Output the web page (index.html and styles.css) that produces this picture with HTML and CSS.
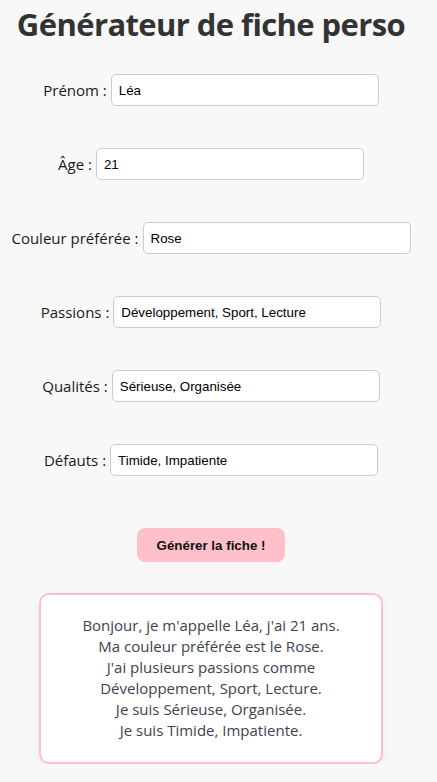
FILE: index.html
```html
<!DOCTYPE html>
<html lang="fr">
<head>
<meta charset="utf-8">
<title>Générateur de fiche perso</title>
<link rel="stylesheet" href="styles.css">
</head>
<body>
<main class="page">
  <h1 class="title">Générateur de fiche perso</h1>
  <form class="form">
    <div class="row"><label class="label">Prénom :</label><input class="field" type="text" value="Léa"></div>
    <div class="row"><label class="label">Âge :</label><input class="field" type="text" value="21"></div>
    <div class="row"><label class="label">Couleur préférée :</label><input class="field" type="text" value="Rose"></div>
    <div class="row"><label class="label">Passions :</label><input class="field" type="text" value="Développement, Sport, Lecture"></div>
    <div class="row"><label class="label">Qualités :</label><input class="field" type="text" value="Sérieuse, Organisée"></div>
    <div class="row"><label class="label">Défauts :</label><input class="field" type="text" value="Timide, Impatiente"></div>
  </form>
  <button class="btn" type="button">Générer la fiche !</button>
  <div class="card">
    <p class="card-text">Bonjour, je m'appelle Léa, j'ai 21 ans.<br>Ma couleur préférée est le Rose.<br>J'ai plusieurs passions comme Développement, Sport, Lecture.<br>Je suis Sérieuse, Organisée.<br>Je suis Timide, Impatiente.</p>
  </div>
</main>
</body>
</html>
```
FILE: styles.css
```css
html, body {
  margin: 0;
  padding: 0;
  background: #f8f8f8;
}
body {
  font-family: "Open Sans", "Noto Sans", sans-serif;
  color: #222;
}
.page {
  width: 422px;
  display: flex;
  flex-direction: column;
  align-items: center;
  padding-top: 2px;
}
.title {
  margin: 0;
  font-size: 31px;
  line-height: 44px;
  font-weight: 700;
  color: #333;
  letter-spacing: -0.6px;
}
.form {
  margin-top: 28px;
  display: flex;
  flex-direction: column;
  align-items: center;
  gap: 42px;
}
.row {
  display: flex;
  align-items: center;
  gap: 4px;
}
.label {
  font-size: 15px;
  color: #1a1a1a;
}
.field {
  box-sizing: border-box;
  width: 268px;
  height: 32px;
  border: 1px solid #ccc;
  border-radius: 5px;
  background: #fff;
  padding: 0 7px;
  font-family: "Liberation Sans", Arial, sans-serif;
  font-size: 13.33px;
  color: #000;
}
.btn {
  margin-top: 52px;
  width: 148px;
  height: 34px;
  border: none;
  border-radius: 8px;
  background: #ffc0cb;
  font-family: "Liberation Sans", Arial, sans-serif;
  font-size: 13.33px;
  font-weight: 700;
  color: #111;
}
.card {
  box-sizing: border-box;
  margin-top: 31px;
  width: 344px;
  border: 2px solid #ffc0cb;
  border-radius: 10px;
  background: #fff;
  padding: 20px 24px 21px;
  box-shadow: 0 3px 8px rgba(0, 0, 0, 0.06);
}
.card-text {
  margin: 0;
  text-align: center;
  font-size: 15px;
  line-height: 21px;
  color: #3e434d;
}
```
